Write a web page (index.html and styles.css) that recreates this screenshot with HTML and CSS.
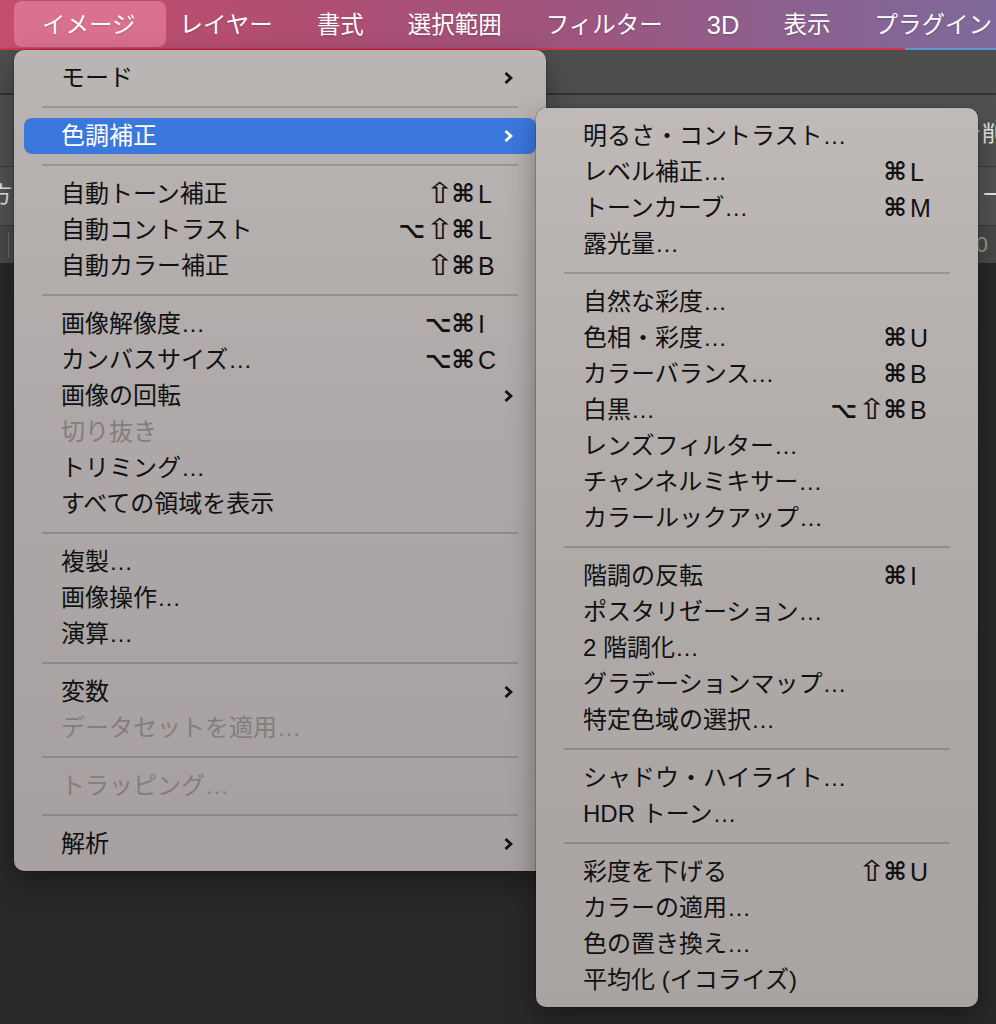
FILE: index.html
```html
<!DOCTYPE html>
<html lang="ja">
<head>
<meta charset="utf-8">
<title>イメージ メニュー</title>
<link rel="stylesheet" href="styles.css">
</head>
<body>
<div class="menubar">
  <span class="mb-item active">イメージ</span>
  <span class="mb-item">レイヤー</span>
  <span class="mb-item">書式</span>
  <span class="mb-item">選択範囲</span>
  <span class="mb-item">フィルター</span>
  <span class="mb-item latin">3D</span>
  <span class="mb-item">表示</span>
  <span class="mb-item">プラグイン</span>
</div>

<div class="workspace">
  <div class="optbar"></div>
  <div class="prow prow-a"><span class="pl"></span><span class="pr">を削除</span></div>
  <div class="prow prow-b"><span class="pl">方</span><span class="pr">ー</span></div>
  <div class="prow prow-c"><span class="pl num">2</span><span class="pr muted">0</span></div>
</div>

<div class="menu menu-main">
  <div class="item"><span class="label">モード</span><svg class="arrow" viewBox="0 0 10 14"><path d="M2.5 2 L8 7 L2.5 12"/></svg></div>
  <div class="sep"></div>
  <div class="item hl"><span class="label">色調補正</span><svg class="arrow" viewBox="0 0 10 14"><path d="M2.5 2 L8 7 L2.5 12"/></svg></div>
  <div class="sep"></div>
  <div class="item"><span class="label">自動トーン補正</span><span class="mods"><span class="sh">⇧</span><span class="cmd">⌘</span></span><span class="key">L</span></div>
  <div class="item"><span class="label">自動コントラスト</span><span class="mods"><span class="opt">⌥</span><span class="sh">⇧</span><span class="cmd">⌘</span></span><span class="key">L</span></div>
  <div class="item"><span class="label">自動カラー補正</span><span class="mods"><span class="sh">⇧</span><span class="cmd">⌘</span></span><span class="key">B</span></div>
  <div class="sep"></div>
  <div class="item"><span class="label">画像解像度…</span><span class="mods"><span class="opt">⌥</span><span class="cmd">⌘</span></span><span class="key">I</span></div>
  <div class="item"><span class="label">カンバスサイズ…</span><span class="mods"><span class="opt">⌥</span><span class="cmd">⌘</span></span><span class="key">C</span></div>
  <div class="item"><span class="label">画像の回転</span><svg class="arrow" viewBox="0 0 10 14"><path d="M2.5 2 L8 7 L2.5 12"/></svg></div>
  <div class="item disabled"><span class="label">切り抜き</span></div>
  <div class="item"><span class="label">トリミング…</span></div>
  <div class="item"><span class="label">すべての領域を表示</span></div>
  <div class="sep"></div>
  <div class="item"><span class="label">複製…</span></div>
  <div class="item"><span class="label">画像操作…</span></div>
  <div class="item"><span class="label">演算…</span></div>
  <div class="sep"></div>
  <div class="item"><span class="label">変数</span><svg class="arrow" viewBox="0 0 10 14"><path d="M2.5 2 L8 7 L2.5 12"/></svg></div>
  <div class="item disabled"><span class="label">データセットを適用…</span></div>
  <div class="sep"></div>
  <div class="item disabled"><span class="label">トラッピング…</span></div>
  <div class="sep"></div>
  <div class="item"><span class="label">解析</span><svg class="arrow" viewBox="0 0 10 14"><path d="M2.5 2 L8 7 L2.5 12"/></svg></div>
</div>

<div class="menu menu-sub">
  <div class="item"><span class="label">明るさ・コントラスト…</span></div>
  <div class="item"><span class="label">レベル補正…</span><span class="mods"><span class="cmd">⌘</span></span><span class="key">L</span></div>
  <div class="item"><span class="label">トーンカーブ…</span><span class="mods"><span class="cmd">⌘</span></span><span class="key">M</span></div>
  <div class="item"><span class="label">露光量…</span></div>
  <div class="sep"></div>
  <div class="item"><span class="label">自然な彩度…</span></div>
  <div class="item"><span class="label">色相・彩度…</span><span class="mods"><span class="cmd">⌘</span></span><span class="key">U</span></div>
  <div class="item"><span class="label">カラーバランス…</span><span class="mods"><span class="cmd">⌘</span></span><span class="key">B</span></div>
  <div class="item"><span class="label">白黒…</span><span class="mods"><span class="opt">⌥</span><span class="sh">⇧</span><span class="cmd">⌘</span></span><span class="key">B</span></div>
  <div class="item"><span class="label">レンズフィルター…</span></div>
  <div class="item"><span class="label">チャンネルミキサー…</span></div>
  <div class="item"><span class="label">カラールックアップ…</span></div>
  <div class="sep"></div>
  <div class="item"><span class="label">階調の反転</span><span class="mods"><span class="cmd">⌘</span></span><span class="key">I</span></div>
  <div class="item"><span class="label">ポスタリゼーション…</span></div>
  <div class="item"><span class="label">2 階調化…</span></div>
  <div class="item"><span class="label">グラデーションマップ…</span></div>
  <div class="item"><span class="label">特定色域の選択…</span></div>
  <div class="sep"></div>
  <div class="item"><span class="label">シャドウ・ハイライト…</span></div>
  <div class="item"><span class="label">HDR トーン…</span></div>
  <div class="sep"></div>
  <div class="item"><span class="label">彩度を下げる</span><span class="mods"><span class="sh">⇧</span><span class="cmd">⌘</span></span><span class="key">U</span></div>
  <div class="item"><span class="label">カラーの適用…</span></div>
  <div class="item"><span class="label">色の置き換え…</span></div>
  <div class="item"><span class="label">平均化 (イコライズ)</span></div>
</div>
</body>
</html>
```

FILE: styles.css
```css
* { box-sizing: border-box; }

html, body {
  margin: 0;
  padding: 0;
}

body {
  width: 996px;
  height: 1024px;
  overflow: hidden;
  position: relative;
  background: #282828;
  font-family: "Liberation Sans", "Noto Sans CJK JP", sans-serif;
  -webkit-font-smoothing: antialiased;
}

/* ---------- menu bar ---------- */
.menubar {
  height: 50px;
  padding: 0 0 2px 20px;
  display: flex;
  align-items: center;
  background:
    linear-gradient(to right, #d3364f 0, #d3364f 905px, #5b96d8 905px) left bottom / 100% 2px no-repeat,
    linear-gradient(90deg, #c54f6d 0%, #b04e72 30%, #9f547c 55%, #8c6190 80%, #7e6a9c 100%);
  white-space: nowrap;
}

.mb-item {
  flex: none;
  height: 46px;
  padding: 3px 22px 0;
  font-size: 23.5px;
  line-height: 43px;
  color: #fff;
  text-shadow: 0 1px 2px rgba(0, 0, 0, 0.18);
}

.mb-item.latin { font-size: 25.5px; }

.mb-item.active {
  margin: 0 -8px 0 -6px;
  padding: 3px 30px 0 28px;
  border-radius: 8px;
  background: #d9718f;
}

/* ---------- background workspace ---------- */
.workspace {
  display: flex;
  flex-direction: column;
  color: #e6e6e6;
  font-size: 22px;
}

.optbar {
  height: 45px;
  background: #4e4e4e;
  border-bottom: 2px solid #333;
}

.prow {
  display: flex;
  justify-content: space-between;
  align-items: center;
  border-bottom: 1px solid #3a3a3a;
}

.prow-a { height: 72px; background: #515151; }
.prow-b { height: 59px; background: #535353; padding-bottom: 8px; }
.prow-c { height: 37px; background: #494949; border-bottom: none; }

.pl { margin-left: -10px; }
.pl.num { margin-left: 8px; color: #cfcfcf; border-left: 1px solid #6a6a6a; padding-left: 4px; }
.pr { margin-right: -30px; }
.prow-b .pr { margin-right: -8px; }
.prow-c .pr { margin-right: 8px; }
.muted { color: #9a9a9a; }

/* ---------- menus ---------- */
.menu {
  position: absolute;
  border-radius: 10px;
  padding: 9.5px 10px;
  box-shadow: 0 0 0 0.5px rgba(0, 0, 0, 0.35), 0 10px 28px rgba(0, 0, 0, 0.35);
  color: #111;
}

.menu-main {
  left: 14px;
  top: 50px;
  width: 532px;
  background: linear-gradient(180deg, #bbb5b4 0%, #aea8a8 45%, #a6a0a0 100%);
  z-index: 1;
}

.menu-sub {
  left: 536px;
  top: 108px;
  width: 442px;
  background: linear-gradient(180deg, #bfb9b7 0%, #b0aaa9 45%, #a9a3a2 100%);
  z-index: 2;
}

.item {
  display: grid;
  grid-template-columns: 1fr auto 25px 10px;
  align-items: center;
  height: 36px;
  padding: 0 23px 0 37px;
  border-radius: 8px;
  font-size: 24px;
  line-height: 36px;
  white-space: nowrap;
}

.item .label { grid-column: 1; }
.item .mods { grid-column: 2; display: flex; align-items: center; height: 36px; }
.item .key { grid-column: 3; font-size: 25px; }
.item .arrow { grid-column: 4; }

.mods span {
  display: inline-block;
  width: 26.5px;
  font-family: "DejaVu Sans", sans-serif;
  text-align: left;
  line-height: 36px;
}

.mods .cmd {
  font-size: 25px;
  font-weight: 700;
}

.mods .opt {
  font-size: 23px;
  font-weight: 700;
}

.mods .sh {
  width: 19px;
  margin-right: 7.5px;
  font-size: 27px;
  letter-spacing: -7px;
  transform: scale(1.3, 1.05);
  transform-origin: 0 50%;
}

.arrow {
  width: 10px;
  height: 14px;
  fill: none;
  stroke: #111;
  stroke-width: 2.7;
  stroke-linejoin: miter;
}

.item.hl {
  background: #3b78dd;
  color: #fff;
}

.item.hl .arrow { stroke: #fff; }

.item.disabled { color: #837d7d; }

.sep {
  height: 2px;
  margin: 10px 18px;
  background: rgba(0, 0, 0, 0.16);
}
```
